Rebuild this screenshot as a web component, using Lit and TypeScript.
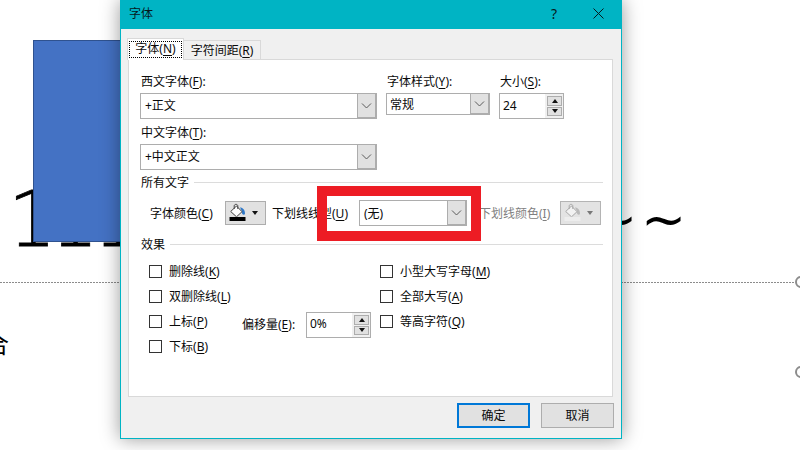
import { LitElement, html, css, svg } from "lit";
import { customElement } from "lit/decorators.js";

const chevron = svg`<svg class="chev" width="11" height="6" viewBox="0 0 11 6"><path d="M1 .5 5.5 5 10 .5" fill="none" stroke="#5a5a5a" stroke-width="1"/></svg>`;

const bucket = (disabled: boolean) => svg`<svg width="20" height="20" viewBox="0 0 20 20">
  <path d="M11 4.5C13.8 4.5 16 7 16 10.5 15.8 12.2 13.2 12.2 13 10L12.8 8Z" fill="${disabled ? "#b9b9b9" : "#2f78c8"}"/>
  <path d="M7.5 3 13 8.7 7.5 13.8 1.7 8.5Z" fill="${disabled ? "#f2f2f2" : "#fff"}" stroke="${disabled ? "#a8a8a8" : "#444"}" stroke-width="1"/>
  <path d="M5.2 6V3C5.2.8 8.8.8 8.8 3V6" fill="none" stroke="${disabled ? "#a8a8a8" : "#444"}" stroke-width="1"/>
  <rect x=".5" y="14" width="16" height="4" fill="${disabled ? "#ededed" : "#000"}"/>
</svg>`;

@customElement("app-root")
export class AppRoot extends LitElement {
  static styles = css`
    :host { display: block; width: 800px; height: 450px; position: relative; overflow: hidden; background: #fff;
      font-family: "Noto Sans", "Noto Sans CJK SC", sans-serif; font-size: 12px; color: #0a0a0a; }
    * { box-sizing: border-box; }
    .big { position: absolute; font-family: "DejaVu Sans", sans-serif; color: #000; white-space: nowrap; }
    .ones { font-weight: 200; font-size: 76px; line-height: 84px; letter-spacing: -6px; left: 8px; top: 178px; -webkit-text-stroke: 0.8px #000; }
    .tilde { font-size: 54px; line-height: 60px; top: 190px; }
    .tilde1 { left: 592px; }
    .tilde2 { left: 641px; }
    .blue { position: absolute; left: 33px; top: 40px; width: 200px; height: 202px; background: #4472c4; border: 1px solid #2f528f; }
    .dash { position: absolute; left: 0; top: 282px; width: 795px; height: 1px; background: repeating-linear-gradient(90deg, #8c8c8c 0 2px, transparent 2px 3px); }
    .handle { position: absolute; left: 795px; width: 12px; height: 12px; border-radius: 50%; border: 2px solid #8c8c8c; background: #fff; }
    .h1 { top: 276px; }
    .h2 { top: 366px; }
    .he { position: absolute; left: -15px; top: 326px; font-size: 24px; line-height: 34px; color: #000; font-family: "Noto Sans CJK SC", sans-serif; }

    .dialog { position: absolute; left: 120px; top: 0; width: 502px; height: 439px; background: #f0f0f0; border: 1px solid #00b4c4; border-top: 0;
      box-shadow: 0 0 18px rgba(0,0,0,.4); display: flex; flex-direction: column; }
    .title { height: 29px; background: #00b4c4; display: flex; align-items: center; padding: 0 17px 0 8px; color: #06191c; flex: none; }
    .title .name { flex: 1; padding-bottom: 3px; }
    .title .help { font-size: 14px; margin-right: 36px; padding-bottom: 3px; }
    .title svg { margin-bottom: 2px; }
    .tabs { display: flex; align-items: flex-end; height: 30px; padding-left: 6px; position: relative; z-index: 1; flex: none; }
    .tab { display: flex; align-items: center; justify-content: center; height: 19px; border: 1px solid #d9d9d9; border-bottom: 0; white-space: nowrap; }
    .tab.on { width: 57px; height: 22px; margin-bottom: -1px; background: #fff; padding-bottom: 1px; }
    .tab.on span { border: 1px dotted #000; width: 53px; height: 17px; display: flex; align-items: center; justify-content: center; padding-bottom: 2px; }
    .tab.off { width: 77px; margin-left: 0; border-left: 0; border-bottom: 0; padding-bottom: 1px; }
    .panel { width: 485px; height: 338px; margin-left: 7px; background: #fff; border: 1px solid #d9d9d9; padding: 11px 9px 0 11px; flex: none; }
    u { text-underline-offset: 2px; }
    .top { display: grid; grid-template-columns: 237px 104px 65px; column-gap: 9px; align-items: start; }
    .lab { height: 20px; line-height: 22px; padding-left: 1px; margin-bottom: 2px; white-space: nowrap; }
    .sel { display: flex; height: 26px; border: 1px solid #adadad; border-right: 0; background: #fff; align-items: center; padding-left: 4px; }
    .sel.s { height: 22px; padding-left: 3px; }
    .sel .v { flex: 1; white-space: nowrap; padding-bottom: 2px; }
    .sel.s .v { padding-bottom: 0; }
    .arrow { width: 20px; align-self: stretch; background: #e1e1e1; border: 2px solid #adadad; border-width: 1px 2px 2px 1px; display: flex; align-items: center; justify-content: center; margin: -1px 0; }
    .mt3 { margin-top: 3px; }
    .spin { display: flex; width: 65px; height: 26px; border: 1px solid #adadad; background: #fff; align-items: center; padding-left: 3px; }
    .spin .v { flex: 1; padding-bottom: 2px; }
    .spin .v.hi { padding-bottom: 4px; }
    .spin .btns { width: 18px; align-self: stretch; background: #f0f0f0; display: flex; flex-direction: column; justify-content: center; gap: 1px; padding: 2px 1px 2px 2px; }
    .spin .b { height: 10px; flex: 1; background: #e1e1e1; border: 1px solid #adadad; display: flex; align-items: center; justify-content: center; }
    .tri-u { width: 0; height: 0; border: 3.5px solid transparent; border-top: 0; border-bottom: 4px solid #111; }
    .tri-d { width: 0; height: 0; border: 3.5px solid transparent; border-bottom: 0; border-top: 4px solid #111; }
    .sec { display: flex; align-items: center; height: 20px; padding-left: 1px; gap: 5px; margin-top: 2px; white-space: nowrap; }
    .sec i { flex: 1; height: 1px; background: #dcdcdc; }
    .sec.second { margin-top: 8px; }
    .row { display: flex; height: 26px; margin-top: 8px; align-items: center; white-space: nowrap; }
    .color { width: 41px; height: 24px; background: #e1e1e1; border: 1px solid #adadad; display: flex; align-items: center; padding-left: 3px; gap: 3px; flex: none; }
    .color.dis { border-color: #b4b4b4; background: #e3e3e3; }
    .dn { width: 0; height: 0; border: 3.5px solid transparent; border-bottom: 0; border-top: 4px solid #111; }
    .dis .dn { border-top-color: #777; }
    .w75 { width: 85px; padding-left: 10px; flex: none; }
    .w77 { width: 77px; margin-left: 6px; flex: none; }
    .usel { width: 108px; margin-left: 10px; flex: none; }
    .usel .v { padding-bottom: 0; }
    .w70 { width: 70px; margin-left: 12px; color: #808080; flex: none; }
    .ml11 { margin-left: 11px; }
    .effects { display: flex; margin: 5px 0 0 9px; }
    .c1 { width: 93px; }
    .c2 { width: 138px; padding-top: 53px; display: flex; gap: 6px; align-items: center; align-self: flex-start; white-space: nowrap; }
    .c2 .oname { width: 58px; padding-bottom: 2px; }
    .c3 { flex: 1; }
    .check { display: flex; align-items: center; height: 25px; gap: 7px; white-space: nowrap; }
    .check span { padding-bottom: 2px; }
    .box { width: 13px; height: 13px; border: 1px solid #333; background: #fff; flex: none; }
    .footer { display: flex; justify-content: flex-end; gap: 11px; padding: 6px 7px 0 0; }
    .btn { width: 73px; height: 25px; background: #e1e1e1; border: 1px solid #adadad; display: flex; align-items: center; justify-content: center; padding-bottom: 2px; }
    .btn.def { border: 2px solid #0078d7; }
    .red { position: absolute; left: 196px; top: 186px; width: 164px; height: 55px; border: 10px solid #ed1c24; }
  `;

  private sel(v: string, cls = "") {
    return html`<div class="sel ${cls}"><span class="v">${v}</span><div class="arrow">${chevron}</div></div>`;
  }
  private spin(v: string, cls = "") {
    return html`<div class="spin"><span class="v ${cls}">${v}</span><div class="btns"><div class="b"><div class="tri-u"></div></div><div class="b"><div class="tri-d"></div></div></div></div>`;
  }
  private check(a: string, k: string) {
    return html`<div class="check"><div class="box"></div><span>${a}(<u>${k}</u>)</span></div>`;
  }

  render() {
    return html`
      <div class="big ones">1111</div>
      <div class="big tilde tilde1">~</div>
      <div class="big tilde tilde2">~</div>
      <div class="blue"></div>
      <div class="dash"></div>
      <div class="handle h1"></div>
      <div class="handle h2"></div>
      <div class="he">合</div>
      <div class="dialog">
        <div class="title"><span class="name">字体</span><span class="help">?</span>
          <svg width="11" height="11" viewBox="0 0 11 11"><path d="M.5.5 10.5 10.5M10.5.5.5 10.5" stroke="#06191c" stroke-width="1" fill="none"/></svg>
        </div>
        <div class="tabs">
          <div class="tab on"><span>字体(<u>N</u>)</span></div>
          <div class="tab off"><span>字符间距(<u>R</u>)</span></div>
        </div>
        <div class="panel">
          <div class="top">
            <div>
              <div class="lab">西文字体(<u>F</u>):</div>
              ${this.sel("+正文")}
              <div class="lab mt3">中文字体(<u>T</u>):</div>
              ${this.sel("+中文正文")}
            </div>
            <div>
              <div class="lab">字体样式(<u>Y</u>):</div>
              ${this.sel("常规", "s")}
            </div>
            <div>
              <div class="lab">大小(<u>S</u>):</div>
              ${this.spin("24")}
            </div>
          </div>
          <div class="sec"><span>所有文字</span><i></i></div>
          <div class="row">
            <span class="w75">字体颜色(<u>C</u>)</span>
            <div class="color">${bucket(false)}<div class="dn"></div></div>
            <span class="w77">下划线线型(<u>U</u>)</span>
            <div class="sel usel"><span class="v">(无)</span><div class="arrow">${chevron}</div></div>
            <span class="w70">下划线颜色(<u>I</u>)</span>
            <div class="color dis ml11">${bucket(true)}<div class="dn"></div></div>
          </div>
          <div class="sec second"><span>效果</span><i></i></div>
          <div class="effects">
            <div class="c1">
              ${this.check("删除线", "K")}
              ${this.check("双删除线", "L")}
              ${this.check("上标", "P")}
              ${this.check("下标", "B")}
            </div>
            <div class="c2"><span class="oname">偏移量(<u>E</u>):</span>${this.spin("0%", "hi")}</div>
            <div class="c3">
              ${this.check("小型大写字母", "M")}
              ${this.check("全部大写", "A")}
              ${this.check("等高字符", "Q")}
            </div>
          </div>
        </div>
        <div class="footer">
          <div class="btn def">确定</div>
          <div class="btn">取消</div>
        </div>
        <div class="red"></div>
      </div>`;
  }
}
